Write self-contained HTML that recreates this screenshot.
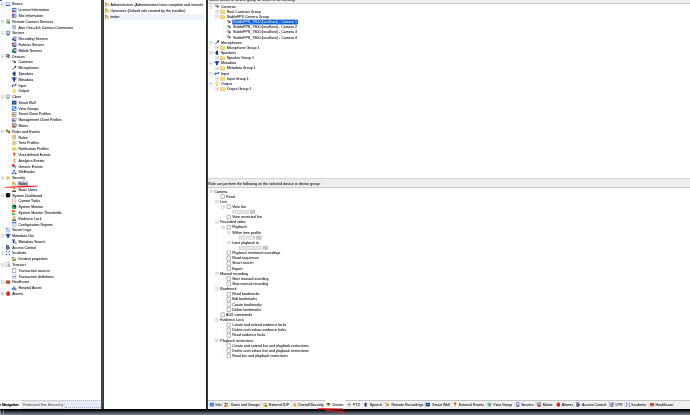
<!DOCTYPE html>
<html><head><meta charset="utf-8"><title>Management Client - Roles</title>
<style>
html,body{margin:0;padding:0;background:#fff;}
body{width:690px;height:415px;overflow:hidden;position:relative;font-family:"Liberation Sans",sans-serif;}
#bg{position:absolute;left:0;top:0;width:690px;height:415px;overflow:hidden;}
#bg div{position:absolute;}
#c{position:absolute;left:0;top:0;width:2144.86px;height:1290.02px;transform:scale(0.3217);transform-origin:0 0;font-size:11.2px;color:#14141a;}
#c>div{position:absolute;}
.t{white-space:nowrap;line-height:16px;height:16px;text-shadow:0 0 1px rgba(36,40,66,0.38);}
.lt{font-size:11px;}
.i svg{display:block;}
.e{width:8px;height:8px;border:1px solid #b2bccb;background:#f4f6fa;}
.e b{position:absolute;background:#5f7090;}
.e .h{left:1.5px;top:3.5px;width:5px;height:1px;}
.e .v{left:3.5px;top:1.5px;width:1px;height:5px;}
.cb{width:10.6px;height:10.6px;border:1.6px solid #1c1c1e;background:#fff;border-radius:1.5px;}
.vl{width:0;border-left:1px dotted #cfcfcf;}
.hl{height:0;border-top:1px dotted #cfcfcf;}
.selg{background:#c4ccda;}
.selb{background:#edf2fa;}
.selx{background:#0b60d2;}
.combo{background:#d6d6d6;color:#fafafa;line-height:13px;font-size:11px;overflow:hidden;}
.combo span{padding-left:5px;}
.cbtn{background:#c6c6c6;}
.tabact{background:#fff;}
.tsep{width:0;border-left:1px solid #c9c9c9;}
.ltab2{background:#f3f3f6;border:1px solid #bfc1c8;box-sizing:border-box;}
</style></head>
<body>
<div id="bg">
  <!-- left panel bottom strip -->
  <div style="left:0;top:400.1px;width:101.4px;height:8.5px;background:#e8ecf9"></div>
  <div style="left:0;top:400.1px;width:101.4px;height:0.7px;background:#cfd0d4"></div>
  <div style="left:64.6px;top:406.6px;width:36px;height:0;border-top:0.35px dotted #aab0c4"></div>
  <!-- top-left fragment -->
  <div style="left:0;top:0;width:2px;height:0.6px;background:#3a6ad8"></div>
  <!-- right panel top band -->
  <div style="left:207.8px;top:0;width:482.2px;height:2.75px;background:#ededed"></div>
  <div style="left:207.8px;top:2.7px;width:482.2px;height:0.5px;background:#c6c8cb"></div>
  <!-- mid band -->
  <div style="left:207.8px;top:178.3px;width:482.2px;height:10.1px;background:#ededed;border-top:0.4px solid #d2d5d8;border-bottom:0.4px solid #c6cace;box-sizing:border-box"></div>
  <!-- right tab strip -->
  <div style="left:207.8px;top:400.1px;width:482.2px;height:8.5px;background:#f1f1f1;border-top:0.35px solid #c4c4c4;box-sizing:border-box"></div>
  <!-- dividers -->
  <div style="left:101.4px;top:0;width:2.3px;height:410px;background:linear-gradient(90deg,#444b58,#333945)"></div>
  <div style="left:205.8px;top:0;width:2.05px;height:410px;background:linear-gradient(90deg,#1e222a,#343a46)"></div>
  <!-- bottom dark bar -->
  <div style="left:0;top:408.6px;width:690px;height:6.4px;background:linear-gradient(#020202 0%,#060707 22%,#2c3138 42%,#59616c 72%,#7c8591 100%)"></div>
  <div style="left:0.4px;top:410.2px;width:1.1px;height:4.8px;background:linear-gradient(#5a626c,#a6aeb8)"></div>
  <div style="left:2.6px;top:410.2px;width:1.2px;height:4.8px;background:linear-gradient(#5a626c,#a6aeb8)"></div>
</div>
<div id="c">
<!-- left tree -->
<div class="vl" style="left:7.3px;top:12.59px;height:899.91px"></div>
<div class="vl" style="left:24.87px;top:20.67px;height:27.91px"></div>
<div class="vl" style="left:24.87px;top:74.67px;height:9.92px"></div>
<div class="vl" style="left:24.87px;top:110.66px;height:45.91px"></div>
<div class="vl" style="left:24.87px;top:182.65px;height:99.91px"></div>
<div class="vl" style="left:24.87px;top:308.64px;height:81.91px"></div>
<div class="vl" style="left:24.87px;top:416.63px;height:117.9px"></div>
<div class="vl" style="left:24.87px;top:560.62px;height:27.91px"></div>
<div class="vl" style="left:24.87px;top:614.61px;height:81.91px"></div>
<div class="vl" style="left:24.87px;top:740.6px;height:9.92px"></div>
<div class="vl" style="left:24.87px;top:794.59px;height:9.92px"></div>
<div class="vl" style="left:24.87px;top:830.59px;height:27.91px"></div>
<div class="vl" style="left:24.87px;top:884.58px;height:9.92px"></div>
<div class="hl" style="left:7.3px;top:12.59px;width:9.64px"></div>
<div class="e" style="left:2.8px;top:8.09px"><b class="h"></b></div>
<div class="i" style="left:16.94px;top:4.59px;width:16px;height:16px"><svg viewBox="0 0 16 16" width="16" height="16"><rect x="2" y="2" width="12" height="9" rx="1" fill="#fff" stroke="#2b5fb8" stroke-width="1.6"/><rect x="0.5" y="11.5" width="15" height="2.5" rx="1" fill="#1f4690"/></svg></div>
<div class="t lt" style="left:37.92px;top:4.59px;">Basics</div>
<div class="hl" style="left:24.87px;top:30.59px;width:11.04px"></div>
<div class="i" style="left:35.9px;top:22.59px;width:16px;height:16px"><svg viewBox="0 0 16 16" width="16" height="16"><rect x="1" y="1" width="14" height="14" rx="1.5" fill="#3a7be0"/><path d="M3 4l5 3 5-3v6H3z" fill="#fff"/><rect x="1" y="9" width="6" height="6" fill="#e0202a"/></svg></div>
<div class="t lt" style="left:57.2px;top:22.59px;">License Information</div>
<div class="hl" style="left:24.87px;top:48.59px;width:11.04px"></div>
<div class="i" style="left:35.9px;top:40.59px;width:16px;height:16px"><svg viewBox="0 0 16 16" width="16" height="16"><rect x="1" y="1" width="14" height="14" rx="1.5" fill="#5a63c8"/><rect x="3" y="8" width="3" height="6" fill="#e8a040"/><rect x="3" y="4" width="3" height="3" fill="#e05050"/><rect x="9" y="3" width="3.4" height="11" fill="#fff"/></svg></div>
<div class="t lt" style="left:57.2px;top:40.59px;">Site Information</div>
<div class="hl" style="left:7.3px;top:66.58px;width:9.64px"></div>
<div class="e" style="left:2.8px;top:62.08px"><b class="h"></b></div>
<div class="i" style="left:16.94px;top:58.58px;width:16px;height:16px"><svg viewBox="0 0 16 16" width="16" height="16"><rect x="2" y="1" width="11" height="13" rx="1" fill="#9aa0a8"/><rect x="3.5" y="3" width="8" height="2" fill="#e8e8e8"/><rect x="3.5" y="6.5" width="8" height="2" fill="#e8e8e8"/><circle cx="10.5" cy="11" r="4" fill="#58b44a"/></svg></div>
<div class="t lt" style="left:37.92px;top:58.58px;">Remote Connect Services</div>
<div class="hl" style="left:24.87px;top:84.58px;width:11.04px"></div>
<div class="i" style="left:35.9px;top:76.58px;width:16px;height:16px"><svg viewBox="0 0 16 16" width="16" height="16"><rect x="2" y="1" width="11" height="10" rx="1" fill="#9aa4b2"/><rect x="3.5" y="3" width="8" height="2" fill="#eef"/><circle cx="9" cy="10.5" r="4.6" fill="#7aa8dc"/><path d="M4.6 10.5h8.8M9 6v9" stroke="#fff" stroke-width="1"/></svg></div>
<div class="t lt" style="left:57.2px;top:76.58px;">Axis One-click Camera Connection</div>
<div class="hl" style="left:7.3px;top:102.58px;width:9.64px"></div>
<div class="e" style="left:2.8px;top:98.08px"><b class="h"></b></div>
<div class="i" style="left:16.94px;top:94.58px;width:16px;height:16px"><svg viewBox="0 0 16 16" width="16" height="16"><rect x="3" y="0.5" width="10" height="15" rx="2" fill="#4a55b0"/><rect x="5" y="2.5" width="6" height="9" fill="#c8d0f4"/><rect x="5" y="12.5" width="6" height="1.5" fill="#222a70"/></svg></div>
<div class="t lt" style="left:37.92px;top:94.58px;">Servers</div>
<div class="hl" style="left:24.87px;top:120.58px;width:11.04px"></div>
<div class="i" style="left:35.9px;top:112.58px;width:16px;height:16px"><svg viewBox="0 0 16 16" width="16" height="16"><rect x="6" y="0.5" width="9" height="15" rx="1.5" fill="#3a4498"/><rect x="8" y="2.5" width="5" height="8" fill="#c0c8f0"/><path d="M0.5 7h6v5h-6z" fill="#20284a"/><circle cx="3.5" cy="9.5" r="1.5" fill="#9ab"/></svg></div>
<div class="t lt" style="left:57.2px;top:112.58px;">Recording Servers</div>
<div class="hl" style="left:24.87px;top:138.58px;width:11.04px"></div>
<div class="i" style="left:35.9px;top:130.58px;width:16px;height:16px"><svg viewBox="0 0 16 16" width="16" height="16"><rect x="6" y="0.5" width="9" height="15" rx="1.5" fill="#3a4498"/><rect x="8" y="2.5" width="5" height="8" fill="#c0c8f0"/><circle cx="4" cy="5" r="3.2" fill="#d82020"/><path d="M2 8l6 4-6 4z" fill="#1c8a2a"/></svg></div>
<div class="t lt" style="left:57.2px;top:130.58px;">Failover Servers</div>
<div class="hl" style="left:24.87px;top:156.57px;width:11.04px"></div>
<div class="i" style="left:35.9px;top:148.57px;width:16px;height:16px"><svg viewBox="0 0 16 16" width="16" height="16"><rect x="6" y="0.5" width="9" height="15" rx="1.5" fill="#3a4498"/><rect x="8" y="2.5" width="5" height="8" fill="#c0c8f0"/><rect x="1" y="4" width="6.5" height="11.5" rx="1" fill="#2e9a32"/></svg></div>
<div class="t lt" style="left:57.2px;top:148.57px;">Mobile Servers</div>
<div class="hl" style="left:7.3px;top:174.57px;width:9.64px"></div>
<div class="e" style="left:2.8px;top:170.07px"><b class="h"></b></div>
<div class="i" style="left:16.94px;top:166.57px;width:16px;height:16px"><svg viewBox="0 0 16 16" width="16" height="16"><path d="M1 2h9l3 2v4l-3 2H1z" fill="#4a4f58"/><circle cx="5" cy="6" r="2.3" fill="#e8e8f0"/><path d="M7 10l4 5M11 10l-5 5" stroke="#555" stroke-width="1.6"/><circle cx="13" cy="12" r="1.6" fill="#3a8a40"/><circle cx="3" cy="13" r="1.4" fill="#b03030"/></svg></div>
<div class="t lt" style="left:37.92px;top:166.57px;">Devices</div>
<div class="hl" style="left:24.87px;top:192.57px;width:11.04px"></div>
<div class="i" style="left:35.9px;top:184.57px;width:16px;height:16px"><svg viewBox="0 0 16 16" width="16" height="16"><path d="M3 5h10v5.500H8l-1.500 1.500H5l-.500-2H3z" fill="#d4d7dc"/><path d="M1 4h9.500" stroke="#2c3038" stroke-width="1.700"/><circle cx="10.800" cy="8.300" r="2.900" fill="#1e2a4a"/><circle cx="10.300" cy="7.800" r="0.900" fill="#9ab0d8"/><path d="M6 11.500l2 2.500" stroke="#666" stroke-width="1.200"/></svg></div>
<div class="t lt" style="left:57.2px;top:184.57px;">Cameras</div>
<div class="hl" style="left:24.87px;top:210.57px;width:11.04px"></div>
<div class="i" style="left:35.9px;top:202.57px;width:16px;height:16px"><svg viewBox="0 0 16 16" width="16" height="16"><path d="M2.5 14.5l6-7" stroke="#222" stroke-width="2"/><path d="M8 8.5l3.2-5.2 2.8 2.2-4.5 4z" fill="#111"/><circle cx="12.6" cy="3.6" r="2.6" fill="#223"/></svg></div>
<div class="t lt" style="left:57.2px;top:202.57px;">Microphones</div>
<div class="hl" style="left:24.87px;top:228.57px;width:11.04px"></div>
<div class="i" style="left:35.9px;top:220.57px;width:16px;height:16px"><svg viewBox="0 0 16 16" width="16" height="16"><path d="M5 5h3l4-4v14l-4-4H5z" fill="#1a3a8a"/><path d="M2 4.5c2 2 2 5 0 7" stroke="#111" stroke-width="1.6" fill="none"/><rect x="6" y="1" width="5" height="14" rx="2" fill="#1d2f7a"/></svg></div>
<div class="t lt" style="left:57.2px;top:220.57px;">Speakers</div>
<div class="hl" style="left:24.87px;top:246.57px;width:11.04px"></div>
<div class="i" style="left:35.9px;top:238.57px;width:16px;height:16px"><svg viewBox="0 0 16 16" width="16" height="16"><path d="M0.500 1.500h15v4.500l-5 3.500v5.500h-5V9.500l-5-3.500z" fill="#1a3a90"/><rect x="2.500" y="3" width="3" height="2.200" fill="#e6eeff"/><rect x="10.500" y="3" width="3" height="2.200" fill="#e6eeff"/></svg></div>
<div class="t lt" style="left:57.2px;top:238.57px;">Metadata</div>
<div class="hl" style="left:24.87px;top:264.56px;width:11.04px"></div>
<div class="i" style="left:35.9px;top:256.56px;width:16px;height:16px"><svg viewBox="0 0 16 16" width="16" height="16"><path d="M1 11l4-5 3.5 4L14 6" stroke="#1a2f8c" stroke-width="2.4" fill="none"/><circle cx="2.5" cy="11" r="2.3" fill="#1a2f8c"/><circle cx="13.2" cy="6.4" r="2.3" fill="#1a2f8c"/></svg></div>
<div class="t lt" style="left:57.2px;top:256.56px;">Input</div>
<div class="hl" style="left:24.87px;top:282.56px;width:11.04px"></div>
<div class="i" style="left:35.9px;top:274.56px;width:16px;height:16px"><svg viewBox="0 0 16 16" width="16" height="16"><circle cx="8" cy="6.2" r="5.6" fill="#f6dc3c"/><circle cx="6.6" cy="5" r="2.2" fill="#fff8b8"/><rect x="5.6" y="11" width="4.8" height="4" rx="1" fill="#c8b060"/></svg></div>
<div class="t lt" style="left:57.2px;top:274.56px;">Output</div>
<div class="hl" style="left:7.3px;top:300.56px;width:9.64px"></div>
<div class="e" style="left:2.8px;top:296.06px"><b class="h"></b></div>
<div class="i" style="left:16.94px;top:292.56px;width:16px;height:16px"><svg viewBox="0 0 16 16" width="16" height="16"><rect x="1" y="1" width="14" height="10" rx="1" fill="#8c9098"/><rect x="3" y="3" width="10" height="6" fill="#e4e6ea"/><rect x="6" y="11" width="4" height="2" fill="#777"/><rect x="3.5" y="13" width="9" height="2" fill="#8c9098"/></svg></div>
<div class="t lt" style="left:37.92px;top:292.56px;">Client</div>
<div class="hl" style="left:24.87px;top:318.56px;width:11.04px"></div>
<div class="i" style="left:35.9px;top:310.56px;width:16px;height:16px"><svg viewBox="0 0 16 16" width="16" height="16"><rect x="0.5" y="2" width="15" height="12" fill="#173a7a"/><path d="M0.5 8h15M5.5 2v12M10.5 2v12" stroke="#8db4f0" stroke-width="1.2"/></svg></div>
<div class="t lt" style="left:57.2px;top:310.56px;">Smart Wall</div>
<div class="hl" style="left:24.87px;top:336.56px;width:11.04px"></div>
<div class="i" style="left:35.9px;top:328.56px;width:16px;height:16px"><svg viewBox="0 0 16 16" width="16" height="16"><rect x="0.5" y="1" width="15" height="14" rx="1.5" fill="#2f7be6"/><rect x="3" y="4" width="6" height="4" fill="#fff"/><rect x="7" y="9" width="6" height="3.4" fill="#fff"/></svg></div>
<div class="t lt" style="left:57.2px;top:328.56px;">View Groups</div>
<div class="hl" style="left:24.87px;top:354.55px;width:11.04px"></div>
<div class="i" style="left:35.9px;top:346.55px;width:16px;height:16px"><svg viewBox="0 0 16 16" width="16" height="16"><rect x="3" y="1" width="12" height="9" fill="#4a5060"/><rect x="4.5" y="2.5" width="9" height="6" fill="#dfe6f6"/><rect x="0.5" y="6" width="7" height="7" fill="#e8962a"/><rect x="2" y="13" width="12" height="2.4" fill="#555"/></svg></div>
<div class="t lt" style="left:57.2px;top:346.55px;">Smart Client Profiles</div>
<div class="hl" style="left:24.87px;top:372.55px;width:11.04px"></div>
<div class="i" style="left:35.9px;top:364.55px;width:16px;height:16px"><svg viewBox="0 0 16 16" width="16" height="16"><rect x="3" y="1" width="12" height="9" fill="#4a5060"/><rect x="4.5" y="2.5" width="9" height="6" fill="#dfe6f6"/><rect x="0.5" y="6" width="7" height="7" fill="#7a56b8"/><rect x="2" y="13" width="12" height="2.4" fill="#555"/></svg></div>
<div class="t lt" style="left:57.2px;top:364.55px;">Management Client Profiles</div>
<div class="hl" style="left:24.87px;top:390.55px;width:11.04px"></div>
<div class="i" style="left:35.9px;top:382.55px;width:16px;height:16px"><svg viewBox="0 0 16 16" width="16" height="16"><rect x="0.5" y="1" width="15" height="11" rx="1" fill="#5a3a30"/><rect x="2.5" y="3" width="11" height="7" fill="#e8e0e8"/><path d="M4 4l8 5M12 4l-8 5" stroke="#3a48b0" stroke-width="1.3"/><rect x="4" y="12.5" width="8" height="3" fill="#c02818"/></svg></div>
<div class="t lt" style="left:57.2px;top:382.55px;">Matrix</div>
<div class="hl" style="left:7.3px;top:408.55px;width:9.64px"></div>
<div class="e" style="left:2.8px;top:404.05px"><b class="h"></b></div>
<div class="i" style="left:16.94px;top:400.55px;width:16px;height:16px"><svg viewBox="0 0 16 16" width="16" height="16"><circle cx="5" cy="6" r="4.4" fill="#4aa23c"/><circle cx="11" cy="9" r="4.2" fill="#d8382a"/><circle cx="8" cy="8" r="2" fill="#f2d84a"/></svg></div>
<div class="t lt" style="left:37.92px;top:400.55px;">Rules and Events</div>
<div class="hl" style="left:24.87px;top:426.55px;width:11.04px"></div>
<div class="i" style="left:35.9px;top:418.55px;width:16px;height:16px"><svg viewBox="0 0 16 16" width="16" height="16"><rect x="2" y="1" width="12" height="14" rx="1.5" fill="#eeb84a"/><rect x="4.5" y="3.5" width="7" height="9" fill="#cfe0fa"/><path d="M5.5 6h5M5.5 8.5h5" stroke="#5a7ec8" stroke-width="1"/></svg></div>
<div class="t lt" style="left:57.2px;top:418.55px;">Rules</div>
<div class="hl" style="left:24.87px;top:444.54px;width:11.04px"></div>
<div class="i" style="left:35.9px;top:436.54px;width:16px;height:16px"><svg viewBox="0 0 16 16" width="16" height="16"><circle cx="8" cy="8" r="7" fill="#e6c050"/><circle cx="8" cy="8" r="4.8" fill="#cfe0f8"/><path d="M8 4.5V8l2.6 1.6" stroke="#3a5aa8" stroke-width="1.3" fill="none"/></svg></div>
<div class="t lt" style="left:57.2px;top:436.54px;">Time Profiles</div>
<div class="hl" style="left:24.87px;top:462.54px;width:11.04px"></div>
<div class="i" style="left:35.9px;top:454.54px;width:16px;height:16px"><svg viewBox="0 0 16 16" width="16" height="16"><rect x="0.5" y="3" width="15" height="10" fill="#f0cf58"/><path d="M0.5 3l7.5 6 7.5-6" stroke="#fff6c8" stroke-width="1.4" fill="none"/><path d="M0.5 8h15" stroke="#d8a838" stroke-width="1"/></svg></div>
<div class="t lt" style="left:57.2px;top:454.54px;">Notification Profiles</div>
<div class="hl" style="left:24.87px;top:480.54px;width:11.04px"></div>
<div class="i" style="left:35.9px;top:472.54px;width:16px;height:16px"><svg viewBox="0 0 16 16" width="16" height="16"><path d="M4 1c5-1 9 2 8 6l-4 3-2-3z" fill="#e0281c"/><path d="M6 7l3 8" stroke="#e89020" stroke-width="2.4"/><circle cx="5.5" cy="4" r="1.6" fill="#f4a030"/></svg></div>
<div class="t lt" style="left:57.2px;top:472.54px;">User-defined Events</div>
<div class="hl" style="left:24.87px;top:498.54px;width:11.04px"></div>
<div class="i" style="left:35.9px;top:490.54px;width:16px;height:16px"><svg viewBox="0 0 16 16" width="16" height="16"><path d="M6 2c4-1 7 1.500 6 5l-3 2-2-2z" fill="#f09a24"/><path d="M7 8l2 7" stroke="#d8401c" stroke-width="2.2"/></svg></div>
<div class="t lt" style="left:57.2px;top:490.54px;">Analytics Events</div>
<div class="hl" style="left:24.87px;top:516.54px;width:11.04px"></div>
<div class="i" style="left:35.9px;top:508.54px;width:16px;height:16px"><svg viewBox="0 0 16 16" width="16" height="16"><circle cx="5.5" cy="5.5" r="4.6" fill="#e0281c"/><circle cx="10.5" cy="10.5" r="4" fill="#4a8ae0"/><circle cx="10.5" cy="10.5" r="1.8" fill="#e8f0ff"/></svg></div>
<div class="t lt" style="left:57.2px;top:508.54px;">Generic Events</div>
<div class="hl" style="left:24.87px;top:534.54px;width:11.04px"></div>
<div class="i" style="left:35.9px;top:526.54px;width:16px;height:16px"><svg viewBox="0 0 16 16" width="16" height="16"><circle cx="8" cy="3.4" r="2.8" fill="#2a62c0"/><circle cx="3.2" cy="12" r="2.8" fill="#1c3f8c"/><circle cx="12.8" cy="12" r="2.8" fill="#1c3f8c"/><path d="M8 4l-4.500 8h9z" stroke="#3a70c8" stroke-width="1.4" fill="none"/></svg></div>
<div class="t lt" style="left:57.2px;top:526.54px;">Webhooks</div>
<div class="hl" style="left:7.3px;top:552.53px;width:9.64px"></div>
<div class="e" style="left:2.8px;top:548.03px"><b class="h"></b></div>
<div class="i" style="left:16.94px;top:544.53px;width:16px;height:16px"><svg viewBox="0 0 16 16" width="16" height="16"><path d="M0.800 8L7.500 2.200 15.200 8 7.500 13.800z" fill="#e0b02a"/><path d="M4.500 8l3-2.600L11 8l-3.500 2.600z" fill="#fbe9a0"/><path d="M7 12.500l1.500 3" stroke="#c89018" stroke-width="1.800"/></svg></div>
<div class="t lt" style="left:37.92px;top:544.53px;">Security</div>
<div class="hl" style="left:24.87px;top:570.53px;width:11.04px"></div>
<div class="i" style="left:35.9px;top:562.53px;width:16px;height:16px"><svg viewBox="0 0 16 16" width="16" height="16"><path d="M4.600 2.500V15.500" stroke="#d29a0e" stroke-width="3.400"/><path d="M4.600 2.800l9.400 8.800" stroke="#d8a414" stroke-width="3.400" stroke-linecap="round"/><circle cx="4.800" cy="5.400" r="2" fill="#ee6e14"/></svg></div>
<div class="selg" style="left:55.02px;top:562.6px;width:33.26px;height:15.85px"></div>
<div class="t lt" style="left:57.2px;top:562.53px;">Roles</div>
<div class="hl" style="left:24.87px;top:588.53px;width:11.04px"></div>
<div class="i" style="left:35.9px;top:580.53px;width:16px;height:16px"><svg viewBox="0 0 16 16" width="16" height="16"><circle cx="8" cy="4.2" r="3.4" fill="#f08a2a"/><path d="M2 14c0-7 12-7 12 0z" fill="#e8a838"/><rect x="2" y="12.500" width="12" height="3" fill="#2c3040"/></svg></div>
<div class="t lt" style="left:57.2px;top:580.53px;">Basic Users</div>
<div class="hl" style="left:7.3px;top:606.53px;width:9.64px"></div>
<div class="e" style="left:2.8px;top:602.03px"><b class="h"></b></div>
<div class="i" style="left:16.94px;top:598.53px;width:16px;height:16px"><svg viewBox="0 0 16 16" width="16" height="16"><circle cx="8" cy="8" r="7.6" fill="#050505"/><path d="M8 8l3-3" stroke="#bbb" stroke-width="1.2"/><circle cx="8" cy="8" r="1.2" fill="#888"/></svg></div>
<div class="t lt" style="left:37.92px;top:598.53px;">System Dashboard</div>
<div class="hl" style="left:24.87px;top:624.53px;width:11.04px"></div>
<div class="i" style="left:35.9px;top:616.53px;width:16px;height:16px"><svg viewBox="0 0 16 16" width="16" height="16"><rect x="2.500" y="0.800" width="11" height="14.400" fill="#f6f0e8" stroke="#8a8078" stroke-width="1.300"/><path d="M5 5h6M5 8h6" stroke="#d8c0b0" stroke-width="1"/></svg></div>
<div class="t lt" style="left:57.2px;top:616.53px;">Current Tasks</div>
<div class="hl" style="left:24.87px;top:642.52px;width:11.04px"></div>
<div class="i" style="left:35.9px;top:634.52px;width:16px;height:16px"><svg viewBox="0 0 16 16" width="16" height="16"><circle cx="8" cy="8" r="7.200" fill="#1f8a2c"/><path d="M8 8V1.500A6.500 6.500 0 0 1 14.500 8z" fill="#0c3a60"/><circle cx="6" cy="10" r="2.400" fill="#48c050"/></svg></div>
<div class="t lt" style="left:57.2px;top:634.52px;">System Monitor</div>
<div class="hl" style="left:24.87px;top:660.52px;width:11.04px"></div>
<div class="i" style="left:35.9px;top:652.52px;width:16px;height:16px"><svg viewBox="0 0 16 16" width="16" height="16"><rect x="1" y="0.500" width="9" height="5" fill="#e03028"/><rect x="1" y="5.500" width="9" height="5" fill="#f2d83a"/><rect x="1" y="10.500" width="9" height="5" fill="#3cb23c"/><path d="M12 2h3M12 8h3M12 13h3" stroke="#667" stroke-width="1.600"/></svg></div>
<div class="t lt" style="left:57.2px;top:652.52px;">System Monitor Thresholds</div>
<div class="hl" style="left:24.87px;top:678.52px;width:11.04px"></div>
<div class="i" style="left:35.9px;top:670.52px;width:16px;height:16px"><svg viewBox="0 0 16 16" width="16" height="16"><path d="M5 7V4.500a3 3 0 0 1 6 0V7" stroke="#8a6a18" stroke-width="1.800" fill="none"/><rect x="3" y="6.500" width="10" height="6" rx="1" fill="#e8b428"/><rect x="1.500" y="12.500" width="13" height="3" fill="#1e2c5a"/></svg></div>
<div class="t lt" style="left:57.2px;top:670.52px;">Evidence Lock</div>
<div class="hl" style="left:24.87px;top:696.52px;width:11.04px"></div>
<div class="i" style="left:35.9px;top:688.52px;width:16px;height:16px"><svg viewBox="0 0 16 16" width="16" height="16"><rect x="2" y="0.800" width="12" height="14.400" rx="1" fill="#f2f6fc" stroke="#4a7ac8" stroke-width="1.400"/><rect x="2" y="0.800" width="12" height="4" fill="#3a72d0"/><path d="M5 8h6M5 11h6" stroke="#9ab4e0" stroke-width="1"/></svg></div>
<div class="t lt" style="left:57.2px;top:688.52px;">Configuration Reports</div>
<div class="hl" style="left:7.3px;top:714.52px;width:9.64px"></div>
<div class="i" style="left:16.94px;top:706.52px;width:16px;height:16px"><svg viewBox="0 0 16 16" width="16" height="16"><rect x="2" y="1" width="12" height="14" rx="1" fill="#eaf1fc" stroke="#5a8ad0" stroke-width="1.400"/><rect x="2" y="1" width="5" height="5" fill="#5a96e0"/><path d="M5 8.500h6M5 11.500h6" stroke="#7aa0dc" stroke-width="1.200"/></svg></div>
<div class="t lt" style="left:37.92px;top:706.52px;">Server Logs</div>
<div class="hl" style="left:7.3px;top:732.51px;width:9.64px"></div>
<div class="e" style="left:2.8px;top:728.01px"><b class="h"></b></div>
<div class="i" style="left:16.94px;top:724.51px;width:16px;height:16px"><svg viewBox="0 0 16 16" width="16" height="16"><path d="M0.500 1.500h15v4.500l-5 3.500v5.500h-5V9.500l-5-3.500z" fill="#1a3a90"/><rect x="2.500" y="3" width="3" height="2.200" fill="#e6eeff"/><rect x="10.500" y="3" width="3" height="2.200" fill="#e6eeff"/></svg></div>
<div class="t lt" style="left:37.92px;top:724.51px;">Metadata Use</div>
<div class="hl" style="left:24.87px;top:750.51px;width:11.04px"></div>
<div class="i" style="left:35.9px;top:742.51px;width:16px;height:16px"><svg viewBox="0 0 16 16" width="16" height="16"><path d="M0.500 1.500h11l-3.500 4.500v3l1 3H3l1-3V6z" fill="#1c3f96"/><circle cx="11" cy="10.500" r="2.800" fill="#dfe8ff" stroke="#223a80" stroke-width="1.300"/><path d="M13 12.500l2.500 3" stroke="#223a80" stroke-width="1.800"/></svg></div>
<div class="t lt" style="left:57.2px;top:742.51px;">Metadata Search</div>
<div class="hl" style="left:7.3px;top:768.51px;width:9.64px"></div>
<div class="i" style="left:16.94px;top:760.51px;width:16px;height:16px"><svg viewBox="0 0 16 16" width="16" height="16"><rect x="2" y="1" width="8" height="14" fill="#2a2e3a"/><rect x="3.500" y="2.500" width="5" height="11" fill="#8a8f9c"/><rect x="9" y="6" width="6" height="6" rx="1" fill="#2e7ad8"/><circle cx="7" cy="8.500" r="1" fill="#222"/></svg></div>
<div class="t lt" style="left:37.92px;top:760.51px;">Access Control</div>
<div class="hl" style="left:7.3px;top:786.51px;width:9.64px"></div>
<div class="e" style="left:2.8px;top:782.01px"><b class="h"></b></div>
<div class="i" style="left:16.94px;top:778.51px;width:16px;height:16px"><svg viewBox="0 0 16 16" width="16" height="16"><circle cx="3" cy="3" r="2.300" fill="#2a5ac0"/><circle cx="13" cy="3" r="2.300" fill="#2a5ac0"/><circle cx="3" cy="13" r="2.300" fill="#2a5ac0"/><circle cx="13" cy="13" r="2.300" fill="#2a5ac0"/><circle cx="8" cy="8" r="1.800" fill="#d83030"/></svg></div>
<div class="t lt" style="left:37.92px;top:778.51px;">Incidents</div>
<div class="hl" style="left:24.87px;top:804.51px;width:11.04px"></div>
<div class="i" style="left:35.9px;top:796.51px;width:16px;height:16px"><svg viewBox="0 0 16 16" width="16" height="16"><circle cx="4" cy="4" r="2.600" fill="#2a5ac0"/><circle cx="12" cy="4" r="2.600" fill="#f0c828"/><rect x="1.500" y="7.500" width="13" height="7.500" rx="1" fill="#f0c828"/><path d="M3 9l10 5M13 9L3 14" stroke="#2a5ac0" stroke-width="1.600"/></svg></div>
<div class="t lt" style="left:57.2px;top:796.51px;">Incident properties</div>
<div class="hl" style="left:7.3px;top:822.51px;width:9.64px"></div>
<div class="e" style="left:2.8px;top:818.01px"><b class="h"></b></div>
<div class="i" style="left:16.94px;top:814.51px;width:16px;height:16px"><svg viewBox="0 0 16 16" width="16" height="16"><rect x="1" y="1" width="10" height="13" fill="#f4f4f4" stroke="#777" stroke-width="1.300"/><circle cx="10.500" cy="9.500" r="3.200" fill="#e8eef8" stroke="#555" stroke-width="1.300"/><path d="M12.600 12l2.800 3.400" stroke="#444" stroke-width="1.800"/></svg></div>
<div class="t lt" style="left:37.92px;top:814.51px;">Transact</div>
<div class="hl" style="left:24.87px;top:840.5px;width:11.04px"></div>
<div class="i" style="left:35.9px;top:832.5px;width:16px;height:16px"><svg viewBox="0 0 16 16" width="16" height="16"><rect x="2.500" y="1" width="11" height="14" fill="#fbfbfb" stroke="#70757c" stroke-width="1.400"/><path d="M5 5h6" stroke="#aaa" stroke-width="1"/></svg></div>
<div class="t lt" style="left:57.2px;top:832.5px;">Transaction sources</div>
<div class="hl" style="left:24.87px;top:858.5px;width:11.04px"></div>
<div class="i" style="left:35.9px;top:850.5px;width:16px;height:16px"><svg viewBox="0 0 16 16" width="16" height="16"><rect x="2.500" y="1" width="11" height="14" fill="#f6f9ff" stroke="#8aa6d8" stroke-width="1"/><path d="M3 10l4-3 3 2 4-4v6H3z" fill="#2e78e0"/></svg></div>
<div class="t lt" style="left:57.2px;top:850.5px;">Transaction definitions</div>
<div class="hl" style="left:7.3px;top:876.5px;width:9.64px"></div>
<div class="e" style="left:2.8px;top:872.0px"><b class="h"></b></div>
<div class="i" style="left:16.94px;top:868.5px;width:16px;height:16px"><svg viewBox="0 0 16 16" width="16" height="16"><ellipse cx="8" cy="8.500" rx="7.500" ry="6.500" fill="#a03a2a"/><path d="M8 11.500L4 7.500a2.200 2.200 0 0 1 4-1.800 2.200 2.200 0 0 1 4 1.800z" fill="#f04848"/><ellipse cx="8" cy="13.200" rx="6" ry="1.800" fill="#e4d4c0"/></svg></div>
<div class="t lt" style="left:37.92px;top:868.5px;">Healthcare</div>
<div class="hl" style="left:24.87px;top:894.5px;width:11.04px"></div>
<div class="i" style="left:35.9px;top:886.5px;width:16px;height:16px"><svg viewBox="0 0 16 16" width="16" height="16"><rect x="1" y="8" width="14" height="7" fill="#3a78d0"/><rect x="3" y="3" width="10" height="6" fill="#c8d4e4"/><path d="M8 4v4M6 6h4" stroke="#3a60b0" stroke-width="1.400"/><rect x="1" y="12" width="14" height="3" fill="#8a96a8"/></svg></div>
<div class="t lt" style="left:57.2px;top:886.5px;">Hospital Assist</div>
<div class="hl" style="left:7.3px;top:912.5px;width:9.64px"></div>
<div class="e" style="left:2.8px;top:908.0px"><b class="h"></b><b class="v"></b></div>
<div class="i" style="left:16.94px;top:904.5px;width:16px;height:16px"><svg viewBox="0 0 16 16" width="16" height="16"><circle cx="8" cy="8.500" r="6.500" fill="#d8201c"/><circle cx="6" cy="6.500" r="2" fill="#f4685c"/><rect x="5" y="0.500" width="6" height="2.500" rx="1" fill="#a01814"/></svg></div>
<div class="t lt" style="left:37.92px;top:904.5px;">Alarms</div>
<!-- middle list -->
<div class="selb" style="left:324.22px;top:44.45px;width:309.61px;height:16.79px"></div>
<div class="i" style="left:324.22px;top:5.99px;width:16px;height:16px"><svg viewBox="0 0 16 16" width="16" height="16"><path d="M4.600 2.500V15.500" stroke="#d29a0e" stroke-width="3.400"/><path d="M4.600 2.800l9.400 8.800" stroke="#d8a414" stroke-width="3.400" stroke-linecap="round"/><circle cx="4.800" cy="5.400" r="2" fill="#ee6e14"/></svg></div>
<div class="t " style="left:343.18px;top:5.99px;">Administrators (Administrators have complete and unrestri</div>
<div class="i" style="left:324.22px;top:24.95px;width:16px;height:16px"><svg viewBox="0 0 16 16" width="16" height="16"><path d="M4.600 2.500V15.500" stroke="#d29a0e" stroke-width="3.400"/><path d="M4.600 2.800l9.400 8.800" stroke="#d8a414" stroke-width="3.400" stroke-linecap="round"/><circle cx="4.800" cy="5.400" r="2" fill="#ee6e14"/></svg></div>
<div class="t " style="left:343.18px;top:24.95px;">Operators (Default role created by the installer)</div>
<div class="i" style="left:324.22px;top:43.91px;width:16px;height:16px"><svg viewBox="0 0 16 16" width="16" height="16"><path d="M4.600 2.500V15.500" stroke="#d29a0e" stroke-width="3.400"/><path d="M4.600 2.800l9.400 8.800" stroke="#d8a414" stroke-width="3.400" stroke-linecap="round"/><circle cx="4.800" cy="5.400" r="2" fill="#ee6e14"/></svg></div>
<div class="t " style="left:343.18px;top:43.91px;">tester</div>
<div class="t " style="left:458.81px;top:-10.8px;color:#666">Name</div>
<!-- right top -->
<div class="vl" style="left:655.27px;top:20.21px;height:240.27px"></div>
<div class="vl" style="left:674.54px;top:26.42px;height:25.82px"></div>
<div class="vl" style="left:693.5px;top:58.46px;height:57.86px"></div>
<div class="e" style="left:650.77px;top:15.71px"><b class="h"></b></div>
<div class="i" style="left:665.53px;top:12.21px;width:16px;height:16px"><svg viewBox="0 0 16 16" width="16" height="16"><path d="M3 5h10v5.500H8l-1.500 1.500H5l-.500-2H3z" fill="#d4d7dc"/><path d="M1 4h9.500" stroke="#2c3038" stroke-width="1.700"/><circle cx="10.800" cy="8.300" r="2.900" fill="#1e2a4a"/><circle cx="10.300" cy="7.800" r="0.900" fill="#9ab0d8"/><path d="M6 11.500l2 2.500" stroke="#666" stroke-width="1.200"/></svg></div>
<div class="t " style="left:686.66px;top:12.21px;">Cameras</div>
<div class="hl" style="left:674.54px;top:36.22px;width:9.64px"></div>
<div class="e" style="left:670.04px;top:31.72px"><b class="h"></b><b class="v"></b></div>
<div class="i" style="left:684.18px;top:28.22px;width:16px;height:16px"><svg viewBox="0 0 16 16" width="16" height="16"><path d="M1 4.600c0-1 .600-1.600 1.600-1.600h3.400l1.600 1.800h6.400c1 0 1.500.600 1.500 1.500v5.600c0 1-.600 1.600-1.600 1.600H2.600c-1 0-1.600-.600-1.600-1.600z" fill="#f7dc72" stroke="#c4921a" stroke-width="1.300"/><path d="M1.800 6.400h12.600" stroke="#fff3b8" stroke-width="1.200"/></svg></div>
<div class="t " style="left:704.69px;top:28.22px;">Real Cameras Group</div>
<div class="hl" style="left:674.54px;top:52.24px;width:9.64px"></div>
<div class="e" style="left:670.04px;top:47.74px"><b class="h"></b></div>
<div class="i" style="left:684.18px;top:44.24px;width:16px;height:16px"><svg viewBox="0 0 16 16" width="16" height="16"><path d="M1 4.600c0-1 .600-1.600 1.600-1.600h3.400l1.600 1.800h6.400c1 0 1.500.600 1.500 1.500v5.600c0 1-.600 1.600-1.600 1.600H2.600c-1 0-1.600-.600-1.600-1.600z" fill="#f7dc72" stroke="#c4921a" stroke-width="1.300"/><path d="M1.800 6.400h12.600" stroke="#fff3b8" stroke-width="1.200"/></svg></div>
<div class="t " style="left:704.69px;top:44.24px;">StableFPS Camera Group</div>
<div class="hl" style="left:693.5px;top:68.26px;width:9.95px"></div>
<div class="i" style="left:703.45px;top:60.26px;width:16px;height:16px"><svg viewBox="0 0 16 16" width="16" height="16"><path d="M3 5h10v5.500H8l-1.500 1.500H5l-.500-2H3z" fill="#d4d7dc"/><path d="M1 4h9.500" stroke="#2c3038" stroke-width="1.700"/><circle cx="10.800" cy="8.300" r="2.900" fill="#1e2a4a"/><circle cx="10.300" cy="7.800" r="0.900" fill="#9ab0d8"/><path d="M6 11.500l2 2.500" stroke="#666" stroke-width="1.200"/></svg></div>
<div class="selx" style="left:721.79px;top:60.64px;width:203.92px;height:15.23px"></div>
<div class="t " style="left:724.28px;top:60.26px;color:#fff">StableFPS_T800 (localhost) - Camera 1</div>
<div class="hl" style="left:693.5px;top:84.28px;width:9.95px"></div>
<div class="i" style="left:703.45px;top:76.28px;width:16px;height:16px"><svg viewBox="0 0 16 16" width="16" height="16"><path d="M3 5h10v5.500H8l-1.500 1.500H5l-.500-2H3z" fill="#d4d7dc"/><path d="M1 4h9.500" stroke="#2c3038" stroke-width="1.700"/><circle cx="10.800" cy="8.300" r="2.900" fill="#1e2a4a"/><circle cx="10.300" cy="7.800" r="0.900" fill="#9ab0d8"/><path d="M6 11.500l2 2.500" stroke="#666" stroke-width="1.200"/></svg></div>
<div class="t " style="left:724.28px;top:76.28px;">StableFPS_T800 (localhost) - Camera 2</div>
<div class="hl" style="left:693.5px;top:100.3px;width:9.95px"></div>
<div class="i" style="left:703.45px;top:92.3px;width:16px;height:16px"><svg viewBox="0 0 16 16" width="16" height="16"><path d="M3 5h10v5.500H8l-1.500 1.500H5l-.500-2H3z" fill="#d4d7dc"/><path d="M1 4h9.500" stroke="#2c3038" stroke-width="1.700"/><circle cx="10.800" cy="8.300" r="2.900" fill="#1e2a4a"/><circle cx="10.300" cy="7.800" r="0.900" fill="#9ab0d8"/><path d="M6 11.500l2 2.500" stroke="#666" stroke-width="1.200"/></svg></div>
<div class="t " style="left:724.28px;top:92.3px;">StableFPS_T800 (localhost) - Camera 3</div>
<div class="hl" style="left:693.5px;top:116.31px;width:9.95px"></div>
<div class="i" style="left:703.45px;top:108.31px;width:16px;height:16px"><svg viewBox="0 0 16 16" width="16" height="16"><path d="M3 5h10v5.500H8l-1.500 1.500H5l-.500-2H3z" fill="#d4d7dc"/><path d="M1 4h9.500" stroke="#2c3038" stroke-width="1.700"/><circle cx="10.800" cy="8.300" r="2.900" fill="#1e2a4a"/><circle cx="10.300" cy="7.800" r="0.900" fill="#9ab0d8"/><path d="M6 11.500l2 2.500" stroke="#666" stroke-width="1.200"/></svg></div>
<div class="t " style="left:724.28px;top:108.31px;">StableFPS_T800 (localhost) - Camera 4</div>
<div class="e" style="left:650.77px;top:127.83px"><b class="h"></b></div>
<div class="i" style="left:665.53px;top:124.33px;width:16px;height:16px"><svg viewBox="0 0 16 16" width="16" height="16"><path d="M2.5 14.5l6-7" stroke="#222" stroke-width="2"/><path d="M8 8.5l3.2-5.2 2.8 2.2-4.5 4z" fill="#111"/><circle cx="12.6" cy="3.6" r="2.6" fill="#223"/></svg></div>
<div class="t " style="left:686.66px;top:124.33px;">Microphones</div>
<div class="hl" style="left:674.54px;top:148.35px;width:9.64px"></div>
<div class="e" style="left:670.04px;top:143.85px"><b class="h"></b><b class="v"></b></div>
<div class="i" style="left:684.18px;top:140.35px;width:16px;height:16px"><svg viewBox="0 0 16 16" width="16" height="16"><path d="M1 4.600c0-1 .600-1.600 1.600-1.600h3.400l1.600 1.800h6.400c1 0 1.500.600 1.500 1.500v5.600c0 1-.600 1.600-1.600 1.600H2.600c-1 0-1.600-.600-1.600-1.600z" fill="#f7dc72" stroke="#c4921a" stroke-width="1.300"/><path d="M1.800 6.400h12.600" stroke="#fff3b8" stroke-width="1.200"/></svg></div>
<div class="t " style="left:704.69px;top:140.35px;">Microphone Group 1</div>
<div class="e" style="left:650.77px;top:159.87px"><b class="h"></b></div>
<div class="i" style="left:665.53px;top:156.37px;width:16px;height:16px"><svg viewBox="0 0 16 16" width="16" height="16"><path d="M5 5h3l4-4v14l-4-4H5z" fill="#1a3a8a"/><path d="M2 4.5c2 2 2 5 0 7" stroke="#111" stroke-width="1.6" fill="none"/><rect x="6" y="1" width="5" height="14" rx="2" fill="#1d2f7a"/></svg></div>
<div class="t " style="left:686.66px;top:156.37px;">Speakers</div>
<div class="hl" style="left:674.54px;top:180.39px;width:9.64px"></div>
<div class="e" style="left:670.04px;top:175.89px"><b class="h"></b><b class="v"></b></div>
<div class="i" style="left:684.18px;top:172.39px;width:16px;height:16px"><svg viewBox="0 0 16 16" width="16" height="16"><path d="M1 4.600c0-1 .600-1.600 1.600-1.600h3.400l1.600 1.800h6.400c1 0 1.500.600 1.500 1.500v5.600c0 1-.600 1.600-1.600 1.600H2.600c-1 0-1.600-.600-1.600-1.600z" fill="#f7dc72" stroke="#c4921a" stroke-width="1.300"/><path d="M1.800 6.400h12.600" stroke="#fff3b8" stroke-width="1.200"/></svg></div>
<div class="t " style="left:704.69px;top:172.39px;">Speaker Group 1</div>
<div class="e" style="left:650.77px;top:191.9px"><b class="h"></b></div>
<div class="i" style="left:665.53px;top:188.4px;width:16px;height:16px"><svg viewBox="0 0 16 16" width="16" height="16"><path d="M0.500 1.500h15v4.500l-5 3.500v5.500h-5V9.500l-5-3.500z" fill="#1a3a90"/><rect x="2.500" y="3" width="3" height="2.200" fill="#e6eeff"/><rect x="10.500" y="3" width="3" height="2.200" fill="#e6eeff"/></svg></div>
<div class="t " style="left:686.66px;top:188.4px;">Metadata</div>
<div class="hl" style="left:674.54px;top:212.42px;width:9.64px"></div>
<div class="e" style="left:670.04px;top:207.92px"><b class="h"></b><b class="v"></b></div>
<div class="i" style="left:684.18px;top:204.42px;width:16px;height:16px"><svg viewBox="0 0 16 16" width="16" height="16"><path d="M1 4.600c0-1 .600-1.600 1.600-1.600h3.400l1.600 1.800h6.400c1 0 1.500.600 1.500 1.500v5.600c0 1-.600 1.600-1.600 1.600H2.600c-1 0-1.600-.600-1.600-1.600z" fill="#f7dc72" stroke="#c4921a" stroke-width="1.300"/><path d="M1.800 6.400h12.600" stroke="#fff3b8" stroke-width="1.200"/></svg></div>
<div class="t " style="left:704.69px;top:204.42px;">Metadata Group 1</div>
<div class="e" style="left:650.77px;top:223.94px"><b class="h"></b></div>
<div class="i" style="left:665.53px;top:220.44px;width:16px;height:16px"><svg viewBox="0 0 16 16" width="16" height="16"><path d="M1 11l4-5 3.5 4L14 6" stroke="#1a2f8c" stroke-width="2.4" fill="none"/><circle cx="2.5" cy="11" r="2.3" fill="#1a2f8c"/><circle cx="13.2" cy="6.4" r="2.3" fill="#1a2f8c"/></svg></div>
<div class="t " style="left:686.66px;top:220.44px;">Input</div>
<div class="hl" style="left:674.54px;top:244.46px;width:9.64px"></div>
<div class="e" style="left:670.04px;top:239.96px"><b class="h"></b><b class="v"></b></div>
<div class="i" style="left:684.18px;top:236.46px;width:16px;height:16px"><svg viewBox="0 0 16 16" width="16" height="16"><path d="M1 4.600c0-1 .600-1.600 1.600-1.600h3.400l1.600 1.800h6.400c1 0 1.500.600 1.500 1.500v5.600c0 1-.600 1.600-1.600 1.600H2.600c-1 0-1.600-.600-1.600-1.600z" fill="#f7dc72" stroke="#c4921a" stroke-width="1.300"/><path d="M1.800 6.400h12.600" stroke="#fff3b8" stroke-width="1.200"/></svg></div>
<div class="t " style="left:704.69px;top:236.46px;">Input Group 1</div>
<div class="e" style="left:650.77px;top:255.98px"><b class="h"></b></div>
<div class="i" style="left:665.53px;top:252.48px;width:16px;height:16px"><svg viewBox="0 0 16 16" width="16" height="16"><circle cx="8" cy="6.2" r="5.6" fill="#f6dc3c"/><circle cx="6.6" cy="5" r="2.2" fill="#fff8b8"/><rect x="5.6" y="11" width="4.8" height="4" rx="1" fill="#c8b060"/></svg></div>
<div class="t " style="left:686.66px;top:252.48px;">Output</div>
<div class="hl" style="left:674.54px;top:276.49px;width:9.64px"></div>
<div class="e" style="left:670.04px;top:271.99px"><b class="h"></b><b class="v"></b></div>
<div class="i" style="left:684.18px;top:268.49px;width:16px;height:16px"><svg viewBox="0 0 16 16" width="16" height="16"><path d="M1 4.600c0-1 .600-1.600 1.600-1.600h3.400l1.600 1.800h6.400c1 0 1.500.600 1.500 1.500v5.600c0 1-.600 1.600-1.600 1.600H2.600c-1 0-1.600-.600-1.600-1.600z" fill="#f7dc72" stroke="#c4921a" stroke-width="1.300"/><path d="M1.800 6.400h12.600" stroke="#fff3b8" stroke-width="1.200"/></svg></div>
<div class="t " style="left:704.69px;top:268.49px;">Output Group 1</div>
<div class="t " style="left:649.36px;top:-9.09px;">Select device or device group for which to set security:</div>
<!-- right bottom -->
<div class="t " style="left:647.5px;top:563.18px;">Role can perform the following on the selected device or device group:</div>
<div class="vl" style="left:674.23px;top:600.71px;height:457.76px"></div>
<div class="vl" style="left:693.5px;top:632.71px;height:41.78px"></div>
<div class="vl" style="left:693.5px;top:696.71px;height:137.78px"></div>
<div class="vl" style="left:711.53px;top:712.71px;height:41.78px"></div>
<div class="vl" style="left:693.5px;top:856.71px;height:25.78px"></div>
<div class="vl" style="left:693.5px;top:904.7px;height:57.78px"></div>
<div class="vl" style="left:693.5px;top:1000.7px;height:41.78px"></div>
<div class="vl" style="left:693.5px;top:1064.7px;height:41.78px"></div>
<div class="e" style="left:651.7px;top:590.0px"><b class="h"></b></div>
<div class="t " style="left:666.46px;top:586.5px;">Camera</div>
<div class="cb" style="left:685.58px;top:604.0px"></div>
<div class="t " style="left:702.67px;top:602.5px;">Read</div>
<div class="e" style="left:669.73px;top:622.0px"><b class="h"></b></div>
<div class="t " style="left:684.8px;top:618.5px;">Live</div>
<div class="e" style="left:689.0px;top:638.0px"><b class="h"></b></div>
<div class="cb" style="left:704.54px;top:636.0px"></div>
<div class="t " style="left:721.64px;top:634.5px;">View live</div>
<div class="combo" style="left:722.1px;top:651.5px;width:51.91px;height:13.99px"><span>(default)</span></div>
<div class="cbtn" style="left:776.81px;top:651.5px;width:16.16px;height:13.99px"></div>
<div class="cb" style="left:704.54px;top:667.99px"></div>
<div class="t " style="left:721.64px;top:666.49px;">View restricted live</div>
<div class="e" style="left:669.73px;top:685.99px"><b class="h"></b></div>
<div class="t " style="left:684.8px;top:682.49px;">Recorded video</div>
<div class="e" style="left:689.0px;top:701.99px"><b class="h"></b></div>
<div class="cb" style="left:704.54px;top:699.99px"></div>
<div class="t " style="left:721.64px;top:698.49px;">Playback</div>
<div class="e" style="left:707.03px;top:717.99px"><b class="h"></b></div>
<div class="t " style="left:722.1px;top:714.49px;">Within time profile</div>
<div class="combo" style="left:741.68px;top:731.5px;width:51.91px;height:13.99px"><span>(default)</span></div>
<div class="cbtn" style="left:796.39px;top:731.5px;width:16.16px;height:13.99px"></div>
<div class="e" style="left:707.03px;top:749.99px"><b class="h"></b></div>
<div class="t " style="left:722.1px;top:746.49px;">Limit playback to</div>
<div class="combo" style="left:741.68px;top:763.5px;width:72.12px;height:13.99px"><span>No restriction</span></div>
<div class="cbtn" style="left:816.6px;top:763.5px;width:16.16px;height:13.99px"></div>
<div class="cb" style="left:704.54px;top:779.99px"></div>
<div class="t " style="left:721.64px;top:778.49px;">Playback restricted recordings</div>
<div class="cb" style="left:704.54px;top:795.99px"></div>
<div class="t " style="left:721.64px;top:794.49px;">Read sequences</div>
<div class="cb" style="left:704.54px;top:811.99px"></div>
<div class="t " style="left:721.64px;top:810.49px;">Smart search</div>
<div class="cb" style="left:704.54px;top:827.99px"></div>
<div class="t " style="left:721.64px;top:826.49px;">Export</div>
<div class="e" style="left:669.73px;top:845.99px"><b class="h"></b></div>
<div class="t " style="left:684.8px;top:842.49px;">Manual recording</div>
<div class="cb" style="left:704.54px;top:859.99px"></div>
<div class="t " style="left:721.64px;top:858.49px;">Start manual recording</div>
<div class="cb" style="left:704.54px;top:875.99px"></div>
<div class="t " style="left:721.64px;top:874.49px;">Stop manual recording</div>
<div class="e" style="left:669.73px;top:893.99px"><b class="h"></b></div>
<div class="t " style="left:684.8px;top:890.49px;">Bookmark</div>
<div class="cb" style="left:704.54px;top:907.99px"></div>
<div class="t " style="left:721.64px;top:906.49px;">Read bookmarks</div>
<div class="cb" style="left:704.54px;top:923.98px"></div>
<div class="t " style="left:721.64px;top:922.48px;">Edit bookmarks</div>
<div class="cb" style="left:704.54px;top:939.98px"></div>
<div class="t " style="left:721.64px;top:938.48px;">Create bookmarks</div>
<div class="cb" style="left:704.54px;top:955.98px"></div>
<div class="t " style="left:721.64px;top:954.48px;">Delete bookmarks</div>
<div class="cb" style="left:685.58px;top:971.98px"></div>
<div class="t " style="left:702.67px;top:970.48px;">AUX commands</div>
<div class="e" style="left:669.73px;top:989.98px"><b class="h"></b></div>
<div class="t " style="left:684.8px;top:986.48px;">Evidence Lock</div>
<div class="cb" style="left:704.54px;top:1003.98px"></div>
<div class="t " style="left:721.64px;top:1002.48px;">Create and extend evidence locks</div>
<div class="cb" style="left:704.54px;top:1019.98px"></div>
<div class="t " style="left:721.64px;top:1018.48px;">Delete and reduce evidence locks</div>
<div class="cb" style="left:704.54px;top:1035.98px"></div>
<div class="t " style="left:721.64px;top:1034.48px;">Read evidence locks</div>
<div class="e" style="left:669.73px;top:1053.98px"><b class="h"></b></div>
<div class="t " style="left:684.8px;top:1050.48px;">Playback restrictions</div>
<div class="cb" style="left:704.54px;top:1067.98px"></div>
<div class="t " style="left:721.64px;top:1066.48px;">Create and extend live and playback restrictions</div>
<div class="cb" style="left:704.54px;top:1083.98px"></div>
<div class="t " style="left:721.64px;top:1082.48px;">Delete and reduce live and playback restrictions</div>
<div class="cb" style="left:704.54px;top:1099.98px"></div>
<div class="t " style="left:721.64px;top:1098.48px;">Read live and playback restrictions</div>
<!-- tabs -->
<div class="tabact" style="left:1011.19px;top:1244.02px;width:61.55px;height:26.11px"></div>
<div class="tsep" style="left:692.42px;top:1247.75px;height:19.89px"></div>
<div class="tsep" style="left:812.4px;top:1247.75px;height:19.89px"></div>
<div class="tsep" style="left:904.72px;top:1247.75px;height:19.89px"></div>
<div class="tsep" style="left:1125.12px;top:1247.75px;height:19.89px"></div>
<div class="tsep" style="left:1192.26px;top:1247.75px;height:19.89px"></div>
<div class="tsep" style="left:1318.46px;top:1247.75px;height:19.89px"></div>
<div class="tsep" style="left:1403.02px;top:1247.75px;height:19.89px"></div>
<div class="tsep" style="left:1510.57px;top:1247.75px;height:19.89px"></div>
<div class="tsep" style="left:1598.23px;top:1247.75px;height:19.89px"></div>
<div class="tsep" style="left:1663.82px;top:1247.75px;height:19.89px"></div>
<div class="tsep" style="left:1723.81px;top:1247.75px;height:19.89px"></div>
<div class="tsep" style="left:1786.29px;top:1247.75px;height:19.89px"></div>
<div class="tsep" style="left:1890.12px;top:1247.75px;height:19.89px"></div>
<div class="tsep" style="left:1940.78px;top:1247.75px;height:19.89px"></div>
<div class="tsep" style="left:2015.39px;top:1247.75px;height:19.89px"></div>
<div class="tsep" style="left:2093.88px;top:1247.75px;height:19.89px"></div>
<div class="i" style="left:650.92px;top:1250.19px;width:15px;height:15px"><svg viewBox="0 0 16 16" width="15" height="15"><circle cx="8" cy="8" r="7.400" fill="#2a6cd0"/><circle cx="8" cy="8" r="7.400" fill="none" stroke="#9ab8e8" stroke-width="1"/><rect x="7" y="6.500" width="2.200" height="6" fill="#fff"/><circle cx="8.100" cy="4.200" r="1.300" fill="#fff"/></svg></div>
<div class="t " style="left:669.57px;top:1249.69px;">Info</div>
<div class="i" style="left:696.3px;top:1250.19px;width:15px;height:15px"><svg viewBox="0 0 16 16" width="15" height="15"><circle cx="5" cy="4.500" r="3" fill="#d83a20"/><circle cx="11" cy="5" r="3" fill="#3a9a30"/><path d="M0.500 15c0-7 9-7 9 0z" fill="#c05820"/><path d="M6.500 15c0-6.500 9-6.500 9 0z" fill="#e8b030"/></svg></div>
<div class="t " style="left:717.13px;top:1249.69px;">Users and Groups</div>
<div class="i" style="left:816.29px;top:1250.19px;width:15px;height:15px"><svg viewBox="0 0 16 16" width="15" height="15"><circle cx="9" cy="5" r="3.200" fill="#e8a020"/><path d="M3 15c0-7 12-7 12 0z" fill="#e8b838"/><path d="M1 4l4 4M5 4L1 8" stroke="#c82820" stroke-width="1.500"/><rect x="8" y="10" width="7" height="5" fill="#3a9038"/></svg></div>
<div class="t " style="left:836.18px;top:1249.69px;">External IDP</div>
<div class="i" style="left:908.61px;top:1250.19px;width:15px;height:15px"><svg viewBox="0 0 16 16" width="15" height="15"><path d="M5 7V5a3 3 0 0 1 6 0v2" stroke="#a88420" stroke-width="1.600" fill="none"/><rect x="3" y="6.500" width="10" height="8" rx="1.200" fill="#e8c048"/><circle cx="8" cy="10.500" r="1.500" fill="#8a6810"/></svg></div>
<div class="t " style="left:926.64px;top:1249.69px;">Overall Security</div>
<div class="i" style="left:1013.68px;top:1250.19px;width:15px;height:15px"><svg viewBox="0 0 16 16" width="15" height="15"><path d="M1 3h8l5 2.500v3.500l-3 .5-2 2H6l-1-3H1z" fill="#4a4036"/><circle cx="10" cy="7" r="1.800" fill="#eef"/><path d="M1 13h13" stroke="#e8a820" stroke-width="2.400"/><circle cx="3" cy="5" r="2" fill="#f0c030"/></svg></div>
<div class="t " style="left:1033.88px;top:1249.69px;">Device</div>
<div class="i" style="left:1078.33px;top:1250.19px;width:15px;height:15px"><svg viewBox="0 0 16 16" width="15" height="15"><path d="M8 0.500l3 3.500H5zM8 15.500l3-3.500H5zM0.500 8l3.500-3v6zM15.500 8L12 5v6z" fill="#e6b020"/><rect x="5.500" y="5.500" width="5" height="5" transform="rotate(45 8 8)" fill="#5a66c8"/></svg></div>
<div class="t " style="left:1097.61px;top:1249.69px;">PTZ</div>
<div class="i" style="left:1129.0px;top:1250.19px;width:15px;height:15px"><svg viewBox="0 0 16 16" width="15" height="15"><path d="M4 5h3l4-4v14l-4-4H4z" fill="#1a3a8a"/><rect x="5.500" y="1" width="5" height="14" rx="2" fill="#1d2f7a"/><circle cx="12.500" cy="8" r="2.400" fill="#e8b020"/></svg></div>
<div class="t " style="left:1149.21px;top:1249.69px;">Speech</div>
<div class="i" style="left:1196.15px;top:1250.19px;width:15px;height:15px"><svg viewBox="0 0 16 16" width="15" height="15"><path d="M1 1l5 5M6 1L1 6" stroke="#d82820" stroke-width="1.600"/><rect x="5" y="5" width="9" height="7" fill="#e8b838"/><path d="M4 14l4-4" stroke="#444" stroke-width="2"/><circle cx="11" cy="8.500" r="2" fill="#444"/></svg></div>
<div class="t " style="left:1216.66px;top:1249.69px;">Remote Recordings</div>
<div class="i" style="left:1322.35px;top:1250.19px;width:15px;height:15px"><svg viewBox="0 0 16 16" width="15" height="15"><rect x="0.5" y="2" width="15" height="12" fill="#173a7a"/><path d="M0.5 8h15M5.5 2v12M10.5 2v12" stroke="#8db4f0" stroke-width="1.2"/></svg></div>
<div class="t " style="left:1343.8px;top:1249.69px;">Smart Wall</div>
<div class="i" style="left:1406.9px;top:1250.19px;width:15px;height:15px"><svg viewBox="0 0 16 16" width="15" height="15"><path d="M4 1c5-1 9 2 8 6l-4 3-2-3z" fill="#e0281c"/><path d="M6 7l3 8" stroke="#e89020" stroke-width="2.4"/><circle cx="5.5" cy="4" r="1.6" fill="#f4a030"/></svg></div>
<div class="t " style="left:1426.17px;top:1249.69px;">External Events</div>
<div class="i" style="left:1514.45px;top:1250.19px;width:15px;height:15px"><svg viewBox="0 0 16 16" width="15" height="15"><circle cx="8" cy="8" r="7" fill="#3a9ad8"/><circle cx="8" cy="8" r="4" fill="#e8c868"/><circle cx="8" cy="8" r="2" fill="#2a6ab0"/></svg></div>
<div class="t " style="left:1533.42px;top:1249.69px;">View Group</div>
<div class="i" style="left:1602.11px;top:1250.19px;width:15px;height:15px"><svg viewBox="0 0 16 16" width="15" height="15"><rect x="3" y="0.500" width="10" height="15" rx="2" fill="#3a4a9a"/><rect x="5" y="2.500" width="6" height="9" fill="#dfe6fa"/></svg></div>
<div class="t " style="left:1620.14px;top:1249.69px;">Servers</div>
<div class="i" style="left:1667.7px;top:1250.19px;width:15px;height:15px"><svg viewBox="0 0 16 16" width="15" height="15"><rect x="0.5" y="1" width="15" height="11" rx="1" fill="#5a3a30"/><rect x="2.5" y="3" width="11" height="7" fill="#e8e0e8"/><path d="M4 4l8 5M12 4l-8 5" stroke="#3a48b0" stroke-width="1.3"/><rect x="4" y="12.5" width="8" height="3" fill="#c02818"/></svg></div>
<div class="t " style="left:1687.29px;top:1249.69px;">Matrix</div>
<div class="i" style="left:1727.7px;top:1250.19px;width:15px;height:15px"><svg viewBox="0 0 16 16" width="15" height="15"><circle cx="8" cy="8.500" r="6.500" fill="#d8201c"/><circle cx="6" cy="6.500" r="2" fill="#f4685c"/><rect x="5" y="0.500" width="6" height="2.500" rx="1" fill="#a01814"/></svg></div>
<div class="t " style="left:1746.35px;top:1249.69px;">Alarms</div>
<div class="i" style="left:1790.18px;top:1250.19px;width:15px;height:15px"><svg viewBox="0 0 16 16" width="15" height="15"><rect x="2" y="1" width="8" height="14" fill="#2a2e3a"/><rect x="3.500" y="2.500" width="5" height="11" fill="#8a8f9c"/><rect x="9" y="6" width="6" height="6" rx="1" fill="#2e7ad8"/><circle cx="7" cy="8.500" r="1" fill="#222"/></svg></div>
<div class="t " style="left:1809.14px;top:1249.69px;">Access Control</div>
<div class="i" style="left:1894.0px;top:1250.19px;width:15px;height:15px"><svg viewBox="0 0 16 16" width="15" height="15"><rect x="1" y="1.500" width="14" height="10" fill="#dfe6f6" stroke="#4a5aa0" stroke-width="1.400"/><rect x="4" y="4" width="8" height="5" fill="#5a6ab8"/><rect x="3" y="12.500" width="10" height="2.500" fill="#4a5aa0"/></svg></div>
<div class="t " style="left:1913.58px;top:1249.69px;">LPR</div>
<div class="i" style="left:1944.67px;top:1250.19px;width:15px;height:15px"><svg viewBox="0 0 16 16" width="15" height="15"><circle cx="3" cy="3" r="2.300" fill="#2a5ac0"/><circle cx="13" cy="3" r="2.300" fill="#2a5ac0"/><circle cx="3" cy="13" r="2.300" fill="#2a5ac0"/><circle cx="13" cy="13" r="2.300" fill="#2a5ac0"/><circle cx="8" cy="8" r="1.800" fill="#d83030"/></svg></div>
<div class="t " style="left:1963.32px;top:1249.69px;">Incidents</div>
<div class="i" style="left:2019.27px;top:1250.19px;width:15px;height:15px"><svg viewBox="0 0 16 16" width="15" height="15"><ellipse cx="8" cy="8.500" rx="7.500" ry="6.500" fill="#a03a2a"/><path d="M8 11.500L4 7.500a2.200 2.200 0 0 1 4-1.800 2.200 2.200 0 0 1 4 1.800z" fill="#f04848"/><ellipse cx="8" cy="13.200" rx="6" ry="1.800" fill="#e4d4c0"/></svg></div>
<div class="t " style="left:2037.92px;top:1249.69px;">Healthcare</div>
<div class="tabact" style="left:0;top:1245.26px;width:67.14px;height:24.87px"></div>
<div class="ltab2" style="left:67.76px;top:1246.5px;width:131.8px;height:23.0px"></div>
<div class="t " style="left:-2.18px;top:1251.25px;color:#000;font-weight:bold;letter-spacing:-0.55px">e Navigation</div>
<div class="t " style="left:72.12px;top:1251.25px;color:#6a6a6a">Federated Site Hierarchy</div>
</div>
<!-- red annotations -->
<svg style="position:absolute;left:0;top:0" width="690" height="415" viewBox="0 0 690 415">
  <path d="M4.6 187.5 C10 186.5 22 185.8 37.9 185.9 C38.2 186.3 30 186.9 18 187.3 C12 187.5 7 187.8 4.600 187.500Z" fill="#ee1c24" stroke="#ee1c24" stroke-width="0.4" stroke-linejoin="round"/>
  <path d="M318.4 408.9 C326 408.8 336 408.9 342.600 409.000" fill="none" stroke="#f01418" stroke-width="1.1" stroke-linecap="round"/>
  <path d="M325.8 410.5 C331 410.7 337 411.0 340.500 411.500 C342 411.900 343.500 412.300 344.600 412.700" fill="none" stroke="#f01418" stroke-width="1.1" stroke-linecap="round"/>
  <path d="M327 409.700 L339 410.100" fill="none" stroke="#7a2a6a" stroke-width="0.7" opacity="0.7"/>
</svg>
</body></html>
